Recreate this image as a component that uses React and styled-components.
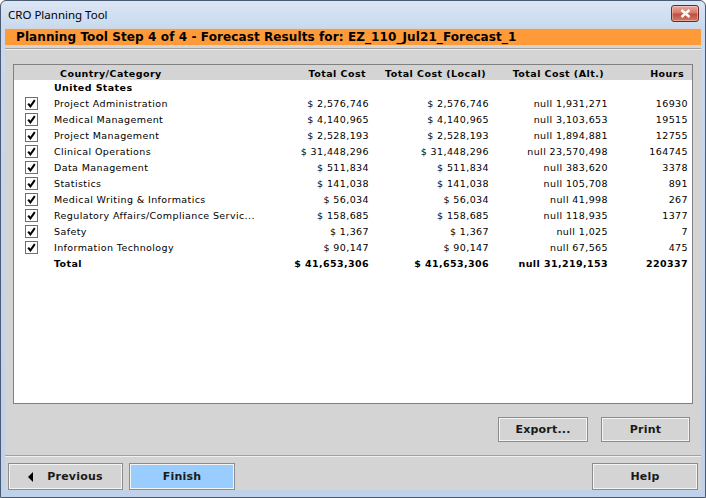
import React from "react";
import styled, { createGlobalStyle } from "styled-components";

const GlobalStyle = createGlobalStyle`
  html, body {
    margin: 0;
    padding: 0;
    background: #ffffff;
  }
  body {
    width: 706px;
    height: 498px;
    overflow: hidden;
  }
`;

const Window = styled.div`
  width: 706px;
  height: 498px;
  box-sizing: border-box;
  display: flex;
  flex-direction: column;
  background: linear-gradient(to bottom, #dbe6f4 0px, #c9d9ee 28px, #bfd2ea 100%);
  border: 1px solid #4a5a70;
  border-radius: 6px 6px 0 0;
`;

const TitleBar = styled.div`
  height: 27px;
  flex: none;
  display: flex;
  align-items: center;
  justify-content: space-between;
  padding: 0 6px 0 7px;
`;

const TitleText = styled.span`
  font-family: "Noto Sans", "Open Sans", sans-serif;
  font-size: 11.5px;
  color: #000000;
`;

const CloseButton = styled.div`
  width: 28px;
  height: 17px;
  margin-top: -3px;
  box-sizing: border-box;
  border: 1px solid #6a2b24;
  border-radius: 3px;
  background: linear-gradient(to bottom, #e9a99e 0%, #d7786a 45%, #c24f3f 55%, #d07a66 100%);
  display: flex;
  align-items: center;
  justify-content: center;
  box-shadow: inset 0 0 0 1px rgba(255, 255, 255, 0.35);
`;

const Client = styled.div`
  flex: 1;
  margin: 0 4px 7px 4px;
  background: #d4d4d4;
  display: flex;
  flex-direction: column;
`;

const Banner = styled.div`
  margin-top: 1px;
  height: 16px;
  background: #ff9a38;
  padding-left: 11px;
  display: flex;
  align-items: center;
  font-family: "DejaVu Sans", Verdana, sans-serif;
  font-weight: bold;
  font-size: 12px;
  letter-spacing: 0.1px;
  color: #000000;
  white-space: nowrap;
`;

const Separator = styled.div`
  height: 1px;
  background: #a0a0a0;
  border-bottom: 1px solid #f0f0f0;
  margin-top: ${(p) => p.$top}px;
`;

const Body = styled.div`
  flex: 1;
  display: flex;
  flex-direction: column;
  padding: 14px 8px 0 8px;
`;

const Panel = styled.div`
  height: 340px;
  box-sizing: border-box;
  border: 1px solid #808080;
  display: flex;
  flex-direction: column;
  font-family: "DejaVu Sans", Verdana, sans-serif;
  font-size: 9.5px;
  letter-spacing: 0.4px;
  color: #000000;
`;

const Grid = styled.div`
  display: grid;
  grid-template-columns: 34px 214px 108px 120px 119px 80px 1fr;
  height: ${(p) => p.$h}px;
  box-sizing: border-box;
  padding-bottom: 1px;
  align-items: center;
  font-weight: ${(p) => (p.$bold ? "bold" : "normal")};
`;

const HeaderRow = styled(Grid)`
  background: #d4d4d4;
  letter-spacing: 0.45px;
  padding-top: 1px;
  padding-bottom: 0;
`;

const Rows = styled.div`
  flex: 1;
  background: #ffffff;
  display: flex;
  flex-direction: column;
`;

const NameCell = styled.div`
  padding-left: ${(p) => p.$pad}px;
  white-space: nowrap;
`;

const NumCell = styled.div`
  text-align: right;
  padding-right: ${(p) => p.$pad}px;
  white-space: nowrap;
`;

const CheckCell = styled.div`
  display: flex;
  justify-content: center;
  padding-left: 1px;
`;

const CheckBox = styled.div`
  width: 13px;
  height: 13px;
  box-sizing: border-box;
  border: 1px solid #6f6f6f;
  background: #ffffff;
  display: flex;
  align-items: center;
  justify-content: center;
`;

const ActionRow = styled.div`
  display: flex;
  justify-content: flex-end;
  gap: 13px;
  padding-right: 3px;
  margin-top: 13px;
`;

const Button = styled.div`
  width: ${(p) => p.$w}px;
  height: ${(p) => p.$h}px;
  box-sizing: border-box;
  border: 1px solid #8c8c8c;
  box-shadow: inset 1px 1px 0 #f4f4f4, inset -1px -1px 0 #f4f4f4;
  background: ${(p) => (p.$primary ? "#99ccff" : "#d4d4d4")};
  display: flex;
  align-items: center;
  justify-content: center;
  gap: 14px;
  font-family: "DejaVu Sans", Verdana, sans-serif;
  font-weight: bold;
  font-size: 11px;
  letter-spacing: 0.2px;
  color: #1a1a1a;
`;

const NavRow = styled.div`
  display: flex;
  align-items: center;
  padding: 6px 3px 0 3px;
  gap: 6px;
`;

const Spacer = styled.div`
  flex: 1;
`;

const rows = [
  ["Project Administration", "$ 2,576,746", "$ 2,576,746", "null 1,931,271", "16930"],
  ["Medical Management", "$ 4,140,965", "$ 4,140,965", "null 3,103,653", "19515"],
  ["Project Management", "$ 2,528,193", "$ 2,528,193", "null 1,894,881", "12755"],
  ["Clinical Operations", "$ 31,448,296", "$ 31,448,296", "null 23,570,498", "164745"],
  ["Data Management", "$ 511,834", "$ 511,834", "null 383,620", "3378"],
  ["Statistics", "$ 141,038", "$ 141,038", "null 105,708", "891"],
  ["Medical Writing & Informatics", "$ 56,034", "$ 56,034", "null 41,998", "267"],
  ["Regulatory Affairs/Compliance Servic...", "$ 158,685", "$ 158,685", "null 118,935", "1377"],
  ["Safety", "$ 1,367", "$ 1,367", "null 1,025", "7"],
  ["Information Technology", "$ 90,147", "$ 90,147", "null 67,565", "475"],
];

const Check = () => (
  <CheckBox>
    <svg width="9" height="9" viewBox="0 0 9 9">
      <path d="M1.2 4.6 L3.4 7.4 L7.8 1.2" fill="none" stroke="#000" strokeWidth="2" />
    </svg>
  </CheckBox>
);

const App = () => {
  return (
    <>
      <GlobalStyle />
      <Window>
        <TitleBar>
          <TitleText>CRO Planning Tool</TitleText>
          <CloseButton>
            <svg width="11" height="9" viewBox="0 0 11 9">
              <path d="M1.5 1 L9.5 8 M9.5 1 L1.5 8" stroke="#ffffff" strokeWidth="2.4" />
            </svg>
          </CloseButton>
        </TitleBar>
        <Client>
          <Banner>Planning Tool Step 4 of 4 - Forecast Results for: EZ_110_Jul21_Forecast_1</Banner>
          <Separator $top={3} />
          <Body>
            <Panel>
              <HeaderRow $h={15} $bold>
                <div />
                <NameCell $pad={12}>Country/Category</NameCell>
                <NumCell $pad={4}>Total Cost</NumCell>
                <NumCell $pad={4}>Total Cost (Local)</NumCell>
                <NumCell $pad={5}>Total Cost (Alt.)</NumCell>
                <NumCell $pad={5}>Hours</NumCell>
                <div />
              </HeaderRow>
              <Rows>
                <Grid $h={16} $bold>
                  <div />
                  <NameCell $pad={6}>United States</NameCell>
                </Grid>
                {rows.map((r) => (
                  <Grid $h={16} key={r[0]}>
                    <CheckCell>
                      <Check />
                    </CheckCell>
                    <NameCell $pad={6}>{r[0]}</NameCell>
                    <NumCell $pad={1}>{r[1]}</NumCell>
                    <NumCell $pad={1}>{r[2]}</NumCell>
                    <NumCell $pad={1}>{r[3]}</NumCell>
                    <NumCell $pad={1}>{r[4]}</NumCell>
                    <div />
                  </Grid>
                ))}
                <Grid $h={16} $bold>
                  <div />
                  <NameCell $pad={6}>Total</NameCell>
                  <NumCell $pad={1}>$ 41,653,306</NumCell>
                  <NumCell $pad={1}>$ 41,653,306</NumCell>
                  <NumCell $pad={1}>null 31,219,153</NumCell>
                  <NumCell $pad={1}>220337</NumCell>
                  <div />
                </Grid>
              </Rows>
            </Panel>
            <ActionRow>
              <Button $w={90} $h={25}>Export...</Button>
              <Button $w={89} $h={25}>Print</Button>
            </ActionRow>
          </Body>
          <Separator $top={13} />
          <NavRow>
            <Button $w={115} $h={27}>
              <svg width="5" height="10" viewBox="0 0 5 10">
                <polygon points="5,0 5,10 0,5" fill="#000" />
              </svg>
              Previous
            </Button>
            <Button $w={106} $h={27} $primary>Finish</Button>
            <Spacer />
            <Button $w={106} $h={27}>Help</Button>
          </NavRow>
        </Client>
      </Window>
    </>
  );
};

export default App;
